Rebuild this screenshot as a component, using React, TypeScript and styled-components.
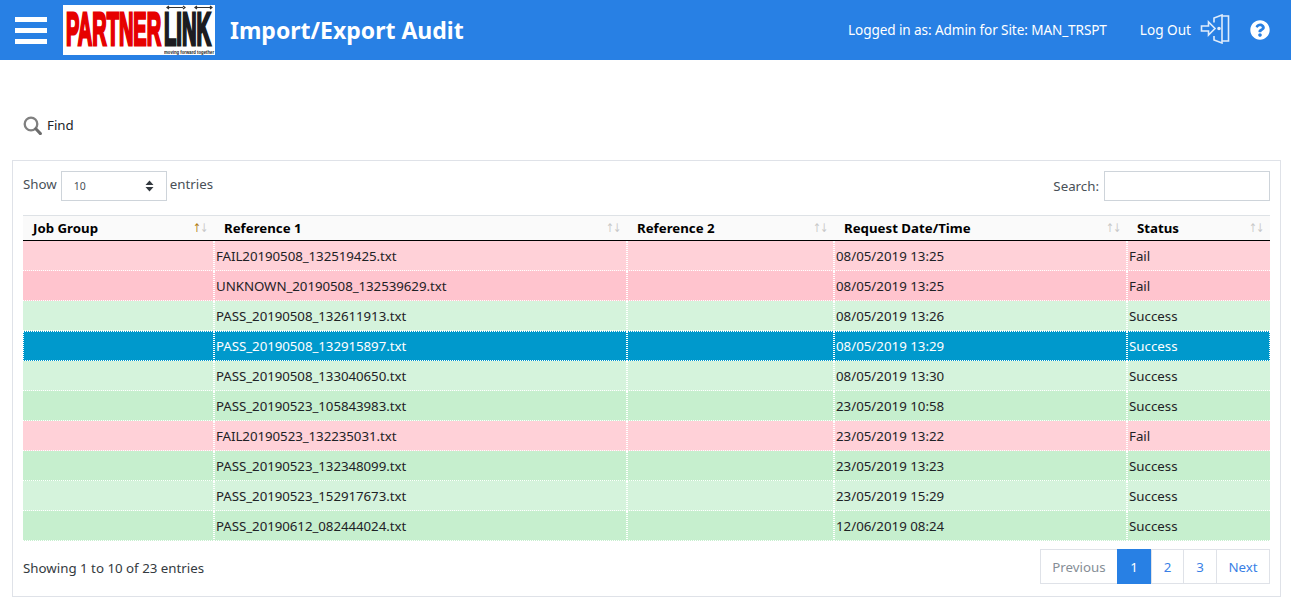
import React from "react";
import styled, { createGlobalStyle } from "styled-components";
import { FaQuestionCircle } from "react-icons/fa";

const Global = createGlobalStyle`
  html, body { margin: 0; padding: 0; background: #fff; }
  body { font-family: "Noto Sans", "Open Sans", sans-serif; font-size: 13.3px; color: #212529; height: 605px; overflow: hidden; }
  * { box-sizing: border-box; }
`;

const Header = styled.header`
  height: 60px; background: #2880e4; color: #fff; display: flex; align-items: center; padding: 0 21px 0 15px;
`;
const Burger = styled.div`
  width: 32px; display: flex; flex-direction: column; gap: 6px; margin-right: 16px;
  span { display: block; height: 5px; background: #fff; }
`;
const Logo = styled.div`
  position: relative; width: 152px; height: 50px; background: #fff; flex: none;
  margin-right: 15px;
`;
const LogoWord = styled.span<{ $c: string; $x: number; $sx: number }>`
  position: absolute; left: ${p => p.$x}px; top: 5px; font-family: "Liberation Sans", sans-serif; font-weight: 700;
  font-size: 47px; line-height: 38px; color: ${p => p.$c}; transform-origin: 0 0; transform: scale(${p => p.$sx}, 1);
  -webkit-text-stroke: 3px ${p => p.$c}; white-space: nowrap;
`;
const LogoTag = styled.span`
  position: absolute; left: 101px; bottom: 0; font-family: "Liberation Sans", sans-serif; font-weight: 700; font-size: 5.6px; line-height: 6px; color: #222; white-space: nowrap;
  transform-origin: 0 50%; transform: scaleX(.76);
`;
const LogoArrows = styled.svg`
  position: absolute; left: 103px; top: 0; width: 48px; height: 5px;
`;
const Title = styled.h1`
  margin: 0; font-size: 23px; font-weight: 700; flex: 1; white-space: nowrap;
`;
const UserText = styled.span`margin-right: 33px; padding-bottom: 2px; font-size: 13.6px; white-space: nowrap; letter-spacing: -.11px;`;
const LogOut = styled.span`margin-right: 9px; padding-bottom: 2px; font-size: 13.6px; white-space: nowrap;`;
const DoorIcon = styled.svg`width: 30px; height: 30px; margin: 0 20px 2px 0; flex: none;`;
const Help = styled(FaQuestionCircle)`width: 20px; height: 20px; flex: none;`;

const FindBar = styled.div`
  height: 100px; display: flex; align-items: center; gap: 5px; padding: 30px 0 0 23px;
`;
const Card = styled.section`
  margin: 0 10px 0 12px; height: 437px; border: 1px solid #dfe2e8; padding: 10px 10px 0 10px;
`;
const TopRow = styled.div`display: flex; justify-content: space-between; height: 44px;`;
const Group = styled.label<{ $gap: number }>`display: flex; align-items: flex-start; gap: ${p => p.$gap}px; color: #495057;`;
const GroupText = styled.span<{ $top: number }>`padding-top: ${p => p.$top}px; line-height: 18px;`;
const FakeSelect = styled.div`
  width: 106px; height: 30px; margin-right: -1px; border: 1px solid #ced4da; display: flex; align-items: center; justify-content: space-between;
  padding: 0 12px; font-size: 10.5px; color: #495057;
`;
const SearchInput = styled.input`
  width: 166px; height: 30px; border: 1px solid #ced4da; margin-left: 2px; outline: none; background: #fff;
`;
const Table = styled.table`
  width: 1247px; border-collapse: separate; border-spacing: 0; table-layout: fixed;
`;
const Col = styled.col<{ $w: number }>`width: ${p => p.$w}px;`;
const Th = styled.th`
  height: 26px; padding: 0 0 0 10px; background: #fafafa; border-top: 1px solid #dee2e6; border-bottom: 1px solid #000;
  text-align: left; font-size: 13.25px; font-weight: 700; color: #000; position: relative; white-space: nowrap;
`;
const Sort = styled.span`
  position: absolute; right: 5px; top: 4px; font-size: 12px; line-height: 16px; color: #c8c8c8; letter-spacing: -1px; font-weight: 400;
  font-family: "DejaVu Sans", sans-serif; transform: scaleX(.8);
  b { font-weight: 400; color: #b07a10; }
`;
const Row = styled.tr<{ $bg: string; $sel?: boolean }>`
  background: ${p => p.$bg}; color: ${p => (p.$sel ? "#fff" : "#1e2226")};
`;
const Td = styled.td<{ $tight?: boolean }>`
  height: 30px; padding: 0 0 0 1px; border-bottom: 1px dotted #fff; border-right: 1px dotted #fff; border-left: 1px dotted #fff; white-space: nowrap;
  letter-spacing: ${p => (p.$tight ? "-.06px" : "0")};
  &:first-child { border-left: 0; }
  &:last-child { border-right: 0; }
`;
const SelTd = styled(Td)`
  border-top: 1px dotted #fff;
  &:first-child { border-left: 1px dotted #fff; }
  &:last-child { border-right: 1px dotted #fff; }
`;
const Foot = styled.div`display: flex; justify-content: space-between; align-items: flex-start; margin-top: 8px;`;
const Info = styled.div`padding-top: 10px; line-height: 18px; color: #343a40;`;
const Pager = styled.nav`display: flex; height: 35px; border: 1px solid #dfe2e8;`;
const PageBtn = styled.a<{ $w: number; $active?: boolean; $off?: boolean }>`
  width: ${p => p.$w}px; display: flex; align-items: center; justify-content: center;
  border-left: ${p => (p.$off || p.$active ? "0" : "1px solid #dfe2e8")};
  background: ${p => (p.$active ? "#2880e4" : "#fff")};
  color: ${p => (p.$active ? "#fff" : p.$off ? "#868e96" : "#3a7fe6")};
  margin: ${p => (p.$active ? "-1px 0" : "0")};
`;

const rows = [
  ["FAIL20190508_132519425.txt", "08/05/2019 13:25", "Fail", "#ffd1d8"],
  ["UNKNOWN_20190508_132539629.txt", "08/05/2019 13:25", "Fail", "#ffc4ce"],
  ["PASS_20190508_132611913.txt", "08/05/2019 13:26", "Success", "#d5f3dc"],
  ["PASS_20190508_132915897.txt", "08/05/2019 13:29", "Success", "#0099cc"],
  ["PASS_20190508_133040650.txt", "08/05/2019 13:30", "Success", "#d5f3dc"],
  ["PASS_20190523_105843983.txt", "23/05/2019 10:58", "Success", "#c6efce"],
  ["FAIL20190523_132235031.txt", "23/05/2019 13:22", "Fail", "#ffd1d8"],
  ["PASS_20190523_132348099.txt", "23/05/2019 13:23", "Success", "#c6efce"],
  ["PASS_20190523_152917673.txt", "23/05/2019 15:29", "Success", "#d5f3dc"],
  ["PASS_20190612_082444024.txt", "12/06/2019 08:24", "Success", "#c6efce"],
];

const cols = [191, 413, 207, 293, 143];
const heads = ["Job Group", "Reference 1", "Reference 2", "Request Date/Time", "Status"];

export default function App() {
  return (
    <>
      <Global />
      <Header>
        <Burger><span /><span /><span /></Burger>
        <Logo>
          <LogoWord $c="#e60000" $x={3} $sx={0.425}>PARTNER</LogoWord>
          <LogoWord $c="#1c1c20" $x={101} $sx={0.43}>LINK</LogoWord>
          <LogoArrows viewBox="0 0 48 5">
            <path d="M1 2.500h16M3 1L1 2.500 3 4M17 1l2 1.500L17 4M29 2.500h17M31 1l-2 1.500L31 4M44 1l2 1.500L44 4" stroke="#333" strokeWidth="1.2" fill="none" />
          </LogoArrows>
          <LogoTag>moving forward together</LogoTag>
        </Logo>
        <Title>Import/Export Audit</Title>
        <UserText>Logged in as: Admin for Site: MAN_TRSPT</UserText>
        <LogOut>Log Out</LogOut>
        <DoorIcon viewBox="0 0 30 30" fill="none" stroke="#dfecfb" strokeWidth="1.6">
          <path d="M14 8.500V4L22 1v28l-8-3v-4M22 2h6.500v25H22" />
          <path d="M1.500 12h7V8l6.500 6.500L8.500 21v-4h-7z" />
          <circle cx="19" cy="14.500" r="1" fill="#dfecfb" />
        </DoorIcon>
        <Help />
      </Header>
      <FindBar>
        <svg width="19" height="19" viewBox="0 0 19 19" fill="none">
          <circle cx="8" cy="8" r="6.300" stroke="#808080" strokeWidth="2.300" />
          <path d="M12.800 12.800l4.600 4.800" stroke="#6c6c6c" strokeWidth="3" strokeLinecap="round" />
        </svg>
        <span>Find</span>
      </FindBar>
      <Card>
        <TopRow>
          <Group $gap={4}>
            <GroupText $top={4}>Show</GroupText>
            <FakeSelect>
              10
              <svg width="9" height="12" viewBox="0 0 9 12"><path d="M4.500 0.500L8.500 5H0.500zM4.500 11.500L0.500 7H8.500z" fill="#343a40" /></svg>
            </FakeSelect>
            <GroupText $top={4}>entries</GroupText>
          </Group>
          <Group $gap={3}>
            <GroupText $top={6}>Search:</GroupText>
            <SearchInput aria-label="Search" />
          </Group>
        </TopRow>
        <Table>
          <colgroup>{cols.map((w, i) => <Col key={i} $w={w} />)}</colgroup>
          <thead>
            <tr>
              {heads.map((h, i) => (
                <Th key={h}>{h}<Sort>{i === 0 ? <b>↑</b> : "↑"}↓</Sort></Th>
              ))}
            </tr>
          </thead>
          <tbody>
            {rows.map(r => {
              const sel = r[3] === "#0099cc";
              const C = sel ? SelTd : Td;
              return (
                <Row key={r[0]} $bg={r[3]} $sel={sel}>
                  <C />
                  <C $tight>{r[0]}</C>
                  <C />
                  <C>{r[1]}</C>
                  <C>{r[2]}</C>
                </Row>
              );
            })}
          </tbody>
        </Table>
        <Foot>
          <Info>Showing 1 to 10 of 23 entries</Info>
          <Pager>
            <PageBtn $w={76} $off>Previous</PageBtn>
            <PageBtn $w={34} $active>1</PageBtn>
            <PageBtn $w={32}>2</PageBtn>
            <PageBtn $w={33}>3</PageBtn>
            <PageBtn $w={53}>Next</PageBtn>
          </Pager>
        </Foot>
      </Card>
    </>
  );
}
